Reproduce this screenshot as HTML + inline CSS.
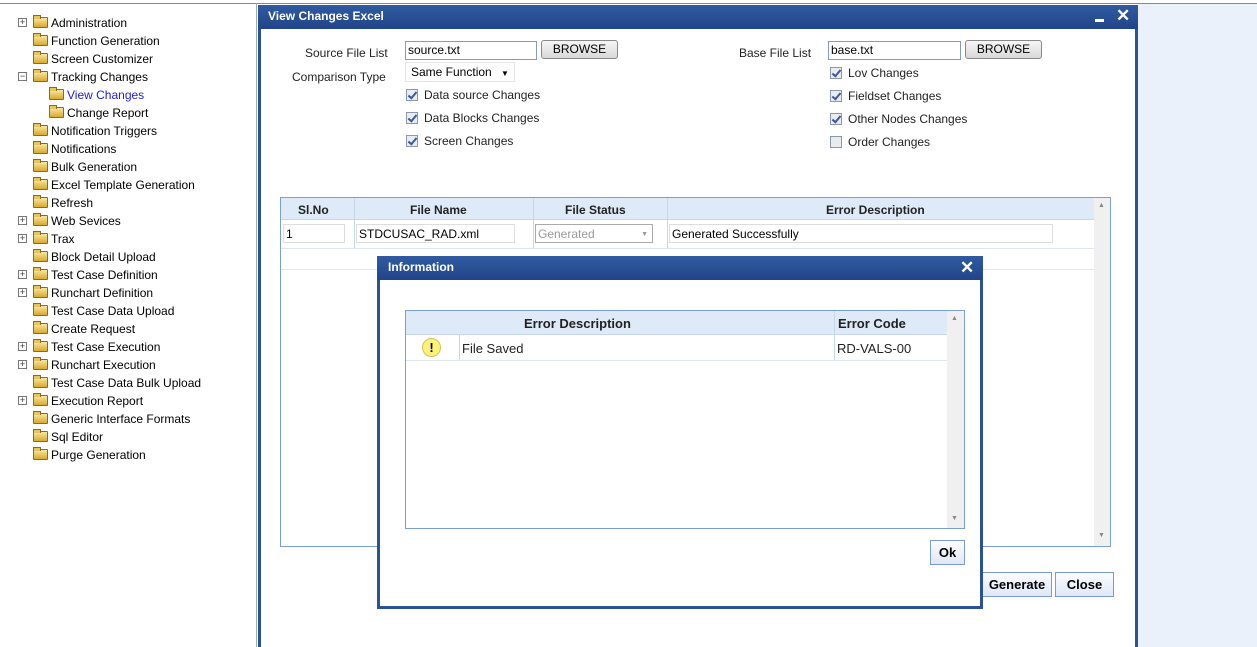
<!DOCTYPE html>
<html><head><style>
*{margin:0;padding:0;box-sizing:border-box}
html,body{width:1257px;height:647px;overflow:hidden}
body{background:#fff;font-family:"Liberation Sans",Arial,sans-serif;font-size:12px;color:#000;position:relative}
.a{position:absolute}
.ti{position:absolute;height:18px;line-height:18px;white-space:nowrap}
.fd{display:inline-block;width:15px;height:11px;background:linear-gradient(#f9e8a0,#d9a830);border:1px solid #8a6a20;border-radius:1px;vertical-align:-1px;margin-right:3px;position:relative}
.fd:before{content:"";position:absolute;left:-1px;top:-3px;width:6px;height:3px;background:#e7c560;border:1px solid #8a6a20;border-bottom:none}
.pm{position:absolute;width:9px;height:9px;border:1px solid #777;background:#fff;font-size:9px;line-height:7px;text-align:center;color:#333}
.hdr{background:linear-gradient(#305ca0,#21448a);color:#fff;font-weight:bold}
.inp{position:absolute;border:1px solid #7f9db9;height:19px;line-height:17px;padding-left:2px;background:#fff}
.btn{position:absolute;border:1px solid #888;border-radius:3px;background:linear-gradient(#f6f6f6,#d8d8d8);text-align:center;font-size:12px;height:19px;line-height:17px}
.cb{display:inline-block;width:12px;height:12px;border:1px solid #8c98a8;background:#e8ecf0;vertical-align:-2px;margin-right:6px;position:relative}
.cb.k:after{content:"";position:absolute;left:3px;top:0px;width:3px;height:7px;border:solid #3a5a9a;border-width:0 2px 2px 0;transform:rotate(40deg)}
.lbl{position:absolute;white-space:nowrap;color:#222}
.bb{position:absolute;border:1px solid #7a9ccc;background:linear-gradient(#fbfcff,#dfe7f7);font-weight:bold;font-size:13px;text-align:center}
</style></head><body>
<div class="a" style="left:0;top:3px;width:1257px;height:1px;background:#6b8cc0"></div>
<div class="a" style="left:256px;top:3px;width:1px;height:644px;background:#9ab"></div>
<div class="a" style="left:1138px;top:4px;width:119px;height:643px;background:#eaf1fa"></div>

<div style="position:absolute;left:0;top:1px;width:256px;height:470px">
<div class="pm" style="left:18px;top:17px">+</div><div class="ti" style="left:33px;top:13px"><span class="fd"></span>Administration</div>
<div class="ti" style="left:33px;top:31px"><span class="fd"></span>Function Generation</div>
<div class="ti" style="left:33px;top:49px"><span class="fd"></span>Screen Customizer</div>
<div class="pm" style="left:18px;top:71px">−</div><div class="ti" style="left:33px;top:67px"><span class="fd"></span>Tracking Changes</div>
<div class="ti" style="left:49px;top:85px;color:#2020e0"><span class="fd"></span>View Changes</div>
<div class="ti" style="left:49px;top:103px"><span class="fd"></span>Change Report</div>
<div class="ti" style="left:33px;top:121px"><span class="fd"></span>Notification Triggers</div>
<div class="ti" style="left:33px;top:139px"><span class="fd"></span>Notifications</div>
<div class="ti" style="left:33px;top:157px"><span class="fd"></span>Bulk Generation</div>
<div class="ti" style="left:33px;top:175px"><span class="fd"></span>Excel Template Generation</div>
<div class="ti" style="left:33px;top:193px"><span class="fd"></span>Refresh</div>
<div class="pm" style="left:18px;top:215px">+</div><div class="ti" style="left:33px;top:211px"><span class="fd"></span>Web Sevices</div>
<div class="pm" style="left:18px;top:233px">+</div><div class="ti" style="left:33px;top:229px"><span class="fd"></span>Trax</div>
<div class="ti" style="left:33px;top:247px"><span class="fd"></span>Block Detail Upload</div>
<div class="pm" style="left:18px;top:269px">+</div><div class="ti" style="left:33px;top:265px"><span class="fd"></span>Test Case Definition</div>
<div class="pm" style="left:18px;top:287px">+</div><div class="ti" style="left:33px;top:283px"><span class="fd"></span>Runchart Definition</div>
<div class="ti" style="left:33px;top:301px"><span class="fd"></span>Test Case Data Upload</div>
<div class="ti" style="left:33px;top:319px"><span class="fd"></span>Create Request</div>
<div class="pm" style="left:18px;top:341px">+</div><div class="ti" style="left:33px;top:337px"><span class="fd"></span>Test Case Execution</div>
<div class="pm" style="left:18px;top:359px">+</div><div class="ti" style="left:33px;top:355px"><span class="fd"></span>Runchart Execution</div>
<div class="ti" style="left:33px;top:373px"><span class="fd"></span>Test Case Data Bulk Upload</div>
<div class="pm" style="left:18px;top:395px">+</div><div class="ti" style="left:33px;top:391px"><span class="fd"></span>Execution Report</div>
<div class="ti" style="left:33px;top:409px"><span class="fd"></span>Generic Interface Formats</div>
<div class="ti" style="left:33px;top:427px"><span class="fd"></span>Sql Editor</div>
<div class="ti" style="left:33px;top:445px"><span class="fd"></span>Purge Generation</div>
</div>

<div class="a" style="left:258px;top:5px;width:880px;height:642px;border:3px solid #2a5294;border-top:none;border-bottom:none;background:#fff"></div>
<div class="a hdr" style="left:258px;top:5px;width:880px;height:24px;line-height:23px;padding-left:10px;font-size:12px">View Changes Excel</div>
<div class="a" style="left:1095px;top:19px;width:9px;height:3px;background:#fff"></div>
<div class="a" style="left:1116px;top:6px;color:#fff;font-size:17px;font-weight:bold">✕</div>

<div class="lbl" style="left:305px;top:46px">Source File List</div>
<div class="inp" style="left:405px;top:41px;width:132px">source.txt</div>
<div class="btn" style="left:541px;top:40px;width:77px">BROWSE</div>
<div class="lbl" style="left:292px;top:70px">Comparison Type</div>
<div class="a" style="left:405px;top:62px;width:110px;height:20px;border:1px solid #e4e4e4;line-height:19px;padding-left:5px">Same Function <span style="font-size:8px;margin-left:6px">▼</span></div>
<div class="lbl" style="left:406px;top:88px"><span class="cb k"></span>Data source Changes</div>
<div class="lbl" style="left:406px;top:111px"><span class="cb k"></span>Data Blocks Changes</div>
<div class="lbl" style="left:406px;top:134px"><span class="cb k"></span>Screen Changes</div>

<div class="lbl" style="left:739px;top:46px">Base File List</div>
<div class="inp" style="left:828px;top:41px;width:133px">base.txt</div>
<div class="btn" style="left:965px;top:40px;width:77px">BROWSE</div>
<div class="lbl" style="left:830px;top:66px"><span class="cb k"></span>Lov Changes</div>
<div class="lbl" style="left:830px;top:89px"><span class="cb k"></span>Fieldset Changes</div>
<div class="lbl" style="left:830px;top:112px"><span class="cb k"></span>Other Nodes Changes</div>
<div class="lbl" style="left:830px;top:135px"><span class="cb"></span>Order Changes</div>

<div class="a" style="left:280px;top:197px;width:831px;height:350px;border:1px solid #7aa0d0;background:#fff"></div>
<div class="a" style="left:281px;top:198px;width:813px;height:22px;background:#dfeaf8;border-bottom:1px solid #c8d6ea"></div>
<div class="a" style="left:1094px;top:198px;width:16px;height:348px;background:#f0f0f0"></div>
<div class="a" style="left:1098px;top:202px;font-size:7px;color:#888">▲</div>
<div class="a" style="left:1098px;top:532px;font-size:7px;color:#888">▼</div>
<div class="a" style="left:354px;top:198px;width:1px;height:50px;background:#c8d6ea"></div>
<div class="a" style="left:533px;top:198px;width:1px;height:50px;background:#c8d6ea"></div>
<div class="a" style="left:667px;top:198px;width:1px;height:50px;background:#c8d6ea"></div>
<div class="lbl" style="left:298px;top:203px;font-weight:bold">Sl.No</div>
<div class="lbl" style="left:410px;top:203px;font-weight:bold">File Name</div>
<div class="lbl" style="left:565px;top:203px;font-weight:bold">File Status</div>
<div class="lbl" style="left:826px;top:203px;font-weight:bold">Error Description</div>
<div class="a" style="left:281px;top:248px;width:813px;height:1px;background:#dde6f2"></div>
<div class="a" style="left:281px;top:269px;width:813px;height:1px;background:#dde6f2"></div>
<div class="inp" style="left:283px;top:224px;width:62px;border-color:#ddd;line-height:19px">1</div>
<div class="inp" style="left:356px;top:224px;width:159px;border-color:#ddd;line-height:19px">STDCUSAC_RAD.xml</div>
<div class="inp" style="left:535px;top:224px;width:118px;border-color:#aaa;color:#999;line-height:19px">Generated<span style="position:absolute;right:4px;font-size:7px;color:#999">▼</span></div>
<div class="inp" style="left:669px;top:224px;width:384px;border-color:#ddd;line-height:19px">Generated Successfully</div>

<div class="bb" style="left:982px;top:572px;width:70px;height:25px;line-height:23px">Generate</div>
<div class="bb" style="left:1055px;top:572px;width:59px;height:25px;line-height:23px">Close</div>

<div class="a" style="left:377px;top:256px;width:606px;height:353px;border:3px solid #2a5294;background:#fff"></div>
<div class="a hdr" style="left:377px;top:256px;width:606px;height:24px;line-height:23px;padding-left:11px">Information</div>
<div class="a" style="left:960px;top:258px;color:#fff;font-size:17px;font-weight:bold">✕</div>
<div class="a" style="left:405px;top:310px;width:560px;height:219px;border:1px solid #7aa0d0"></div>
<div class="a" style="left:406px;top:311px;width:541px;height:24px;background:#dfeaf8;border-bottom:1px solid #c8d6ea"></div>
<div class="a" style="left:947px;top:311px;width:17px;height:217px;background:#f0f0f0"></div>
<div class="a" style="left:951px;top:315px;font-size:7px;color:#888">▲</div>
<div class="a" style="left:951px;top:515px;font-size:7px;color:#888">▼</div>
<div class="a" style="left:834px;top:311px;width:1px;height:50px;background:#c8d6ea"></div>
<div class="a" style="left:459px;top:335px;width:1px;height:26px;background:#c8d6ea"></div>
<div class="a" style="left:406px;top:360px;width:541px;height:1px;background:#dde6f2"></div>
<div class="lbl" style="left:524px;top:316px;font-weight:bold;font-size:13px">Error Description</div>
<div class="lbl" style="left:838px;top:316px;font-weight:bold;font-size:13px">Error Code</div>
<div class="a" style="left:422px;top:338px;width:19px;height:19px;border-radius:50%;background:#fbf27a;border:1px solid #cfc45a;text-align:center;font-weight:bold;font-size:13px;line-height:17px">!</div>
<div class="lbl" style="left:462px;top:341px;font-size:13px">File Saved</div>
<div class="lbl" style="left:837px;top:341px;font-size:13px">RD-VALS-00</div>
<div class="bb" style="left:930px;top:540px;width:35px;height:25px;line-height:23px">Ok</div>
</body></html>
